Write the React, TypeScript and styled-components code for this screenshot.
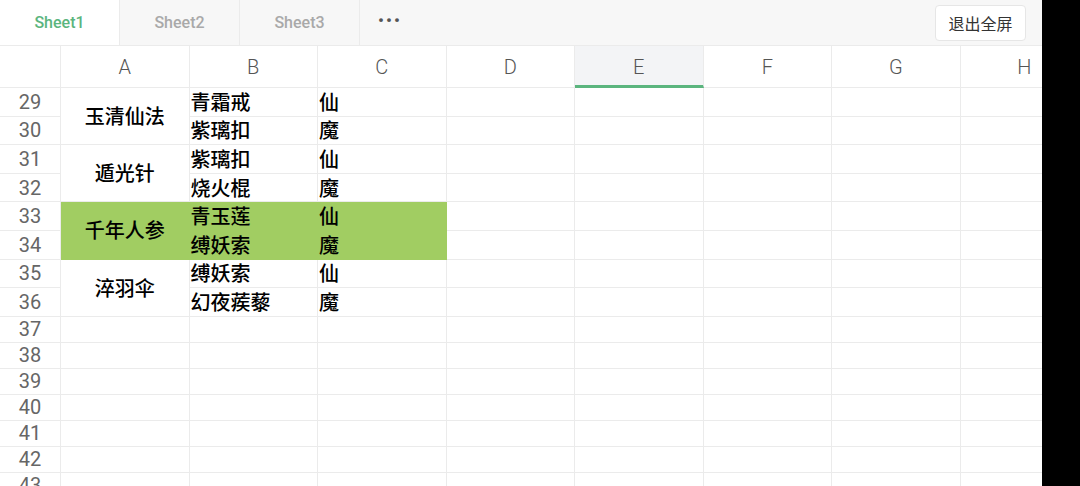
import * as React from 'react';
import styled, { createGlobalStyle, css } from 'styled-components';

const GlobalStyle = createGlobalStyle`
	html, body {
		margin: 0;
		padding: 0;
		background: #000;
		overflow: hidden;
	}
	body {
		font-family: Roboto, 'Noto Sans CJK SC', sans-serif;
	}
`;

const COL_W = 128.5;
const ROW_HEAD_W = 61;
const LINE = '#ebebeb';
const GREEN = '#5bb57e';
const FILL = '#a1cd62';

const columns = ['A', 'B', 'C', 'D', 'E', 'F', 'G', 'H'];

interface IRow {
	num: number;
	height: number;
}

const rows: IRow[] = [
	{ num: 29, height: 28.6 },
	{ num: 30, height: 28.6 },
	{ num: 31, height: 28.6 },
	{ num: 32, height: 28.6 },
	{ num: 33, height: 28.6 },
	{ num: 34, height: 28.6 },
	{ num: 35, height: 28.6 },
	{ num: 36, height: 28.6 },
	{ num: 37, height: 26 },
	{ num: 38, height: 26 },
	{ num: 39, height: 26 },
	{ num: 40, height: 26 },
	{ num: 41, height: 26 },
	{ num: 42, height: 26 },
	{ num: 43, height: 26 }
];

interface IGroup {
	name: string;
	items: [string, string][];
	fill?: boolean;
}

const groups: IGroup[] = [
	{ name: '玉清仙法', items: [['青霜戒', '仙'], ['紫璃扣', '魔']] },
	{ name: '遁光针', items: [['紫璃扣', '仙'], ['烧火棍', '魔']] },
	{ name: '千年人参', items: [['青玉莲', '仙'], ['缚妖索', '魔']], fill: true },
	{ name: '淬羽伞', items: [['缚妖索', '仙'], ['幻夜蒺藜', '魔']] }
];

const Screen = styled.div`
	display: flex;
	width: 1080px;
	height: 486px;
`;

const Main = styled.div`
	width: 1042px;
	display: flex;
	flex-direction: column;
	background: #fff;
	overflow: hidden;
`;

const TabBar = styled.div`
	height: 46px;
	flex-shrink: 0;
	box-sizing: border-box;
	display: flex;
	align-items: stretch;
	background: #f7f7f7;
	border-bottom: 1px solid ${LINE};
`;

const Tab = styled.div<{ $active?: boolean }>`
	width: 119px;
	display: flex;
	align-items: center;
	justify-content: center;
	border-right: 1px solid ${LINE};
	font-family: Roboto, sans-serif;
	font-size: 16px;
	font-weight: 500;
	color: #a9a9a9;
	background: #f7f7f7;
	${p =>
		p.$active &&
		css`
			background: #fff;
			color: ${GREEN};
		`}
`;

const More = styled(Tab)`
	width: 60px;
	border-right: none;
	letter-spacing: 2px;
	color: #555;
	font-size: 17px;
	padding-bottom: 5px;
	box-sizing: border-box;
`;

const Spacer = styled.div`
	flex: 1;
`;

const ExitButton = styled.button`
	align-self: center;
	margin-right: 16px;
	height: 36px;
	width: 91px;
	background: #fff;
	border: 1px solid #e6e6e6;
	border-radius: 4px;
	font-family: 'Noto Sans CJK SC', sans-serif;
	font-size: 16px;
	color: #333;
	padding: 0;
`;

const Sheet = styled.div<{ $rows: string }>`
	display: grid;
	flex-shrink: 0;
	grid-template-columns: ${ROW_HEAD_W}px repeat(8, ${COL_W}px);
	grid-template-rows: 42px ${p => p.$rows};
`;

const Cell = styled.div<{ $fill?: boolean }>`
	box-sizing: border-box;
	border-right: 1px solid ${p => (p.$fill ? FILL : LINE)};
	border-bottom: 1px solid ${p => (p.$fill ? FILL : LINE)};
	background: ${p => (p.$fill ? FILL : '#fff')};
	font-family: 'Noto Sans CJK SC', sans-serif;
	font-size: 20px;
	font-weight: 500;
	color: #000;
	display: flex;
	align-items: center;
	padding-left: 1px;
	line-height: 1;
	overflow: hidden;
	white-space: nowrap;
`;

const MergedCell = styled(Cell)`
	justify-content: center;
	padding-left: 0;
`;

const ColHead = styled.div<{ $selected?: boolean }>`
	box-sizing: border-box;
	border-right: 1px solid ${LINE};
	border-bottom: 1px solid ${LINE};
	display: flex;
	align-items: center;
	justify-content: center;
	font-family: Roboto, sans-serif;
	font-weight: 300;
	font-size: 20px;
	color: #555;
	background: #fff;
	${p =>
		p.$selected &&
		css`
			background: #f3f4f6;
			border-bottom: 3px solid ${GREEN};
			padding-top: 2px;
		`}
`;

const RowHead = styled.div`
	box-sizing: border-box;
	border-right: 1px solid ${LINE};
	border-bottom: 1px solid ${LINE};
	display: flex;
	align-items: center;
	justify-content: center;
	font-family: Roboto, sans-serif;
	font-size: 20px;
	color: #666;
	background: #fff;
	overflow: hidden;
`;

const BlackEdge = styled.div`
	flex: 1;
	background: #000;
`;

const App: React.FC = () => {
	const cells: React.ReactNode[] = [];

	cells.push(<ColHead key="corner" />);
	columns.forEach(c => cells.push(<ColHead key={c} $selected={c === 'E'}>{c}</ColHead>));

	rows.forEach((r, i) => {
		const line = i + 2;
		cells.push(
			<RowHead key={`rh${r.num}`} style={{ gridRow: line, gridColumn: 1 }}>
				{r.num}
			</RowHead>
		);
		const gi = Math.floor(i / 2);
		const group = i < groups.length * 2 ? groups[gi] : undefined;
		if (group) {
			const item = group.items[i % 2];
			if (i % 2 === 0) {
				cells.push(
					<MergedCell key={`a${r.num}`} $fill={group.fill} style={{ gridRow: `${line} / span 2`, gridColumn: 2 }}>
						{group.name}
					</MergedCell>
				);
			}
			cells.push(
				<Cell key={`b${r.num}`} $fill={group.fill} style={{ gridRow: line, gridColumn: 3 }}>
					{item[0]}
				</Cell>
			);
			cells.push(
				<Cell key={`c${r.num}`} $fill={group.fill} style={{ gridRow: line, gridColumn: 4 }}>
					{item[1]}
				</Cell>
			);
			for (let c = 5; c <= 9; c++) {
				cells.push(<Cell key={`x${r.num}-${c}`} style={{ gridRow: line, gridColumn: c }} />);
			}
		} else {
			for (let c = 2; c <= 9; c++) {
				cells.push(<Cell key={`x${r.num}-${c}`} style={{ gridRow: line, gridColumn: c }} />);
			}
		}
	});

	return (
		<Screen>
			<GlobalStyle />
			<Main>
				<TabBar>
					<Tab $active>Sheet1</Tab>
					<Tab>Sheet2</Tab>
					<Tab>Sheet3</Tab>
					<More>•••</More>
					<Spacer />
					<ExitButton>退出全屏</ExitButton>
				</TabBar>
				<Sheet $rows={rows.map(r => `${r.height}px`).join(' ')}>{cells}</Sheet>
			</Main>
			<BlackEdge />
		</Screen>
	);
};

export default App;
